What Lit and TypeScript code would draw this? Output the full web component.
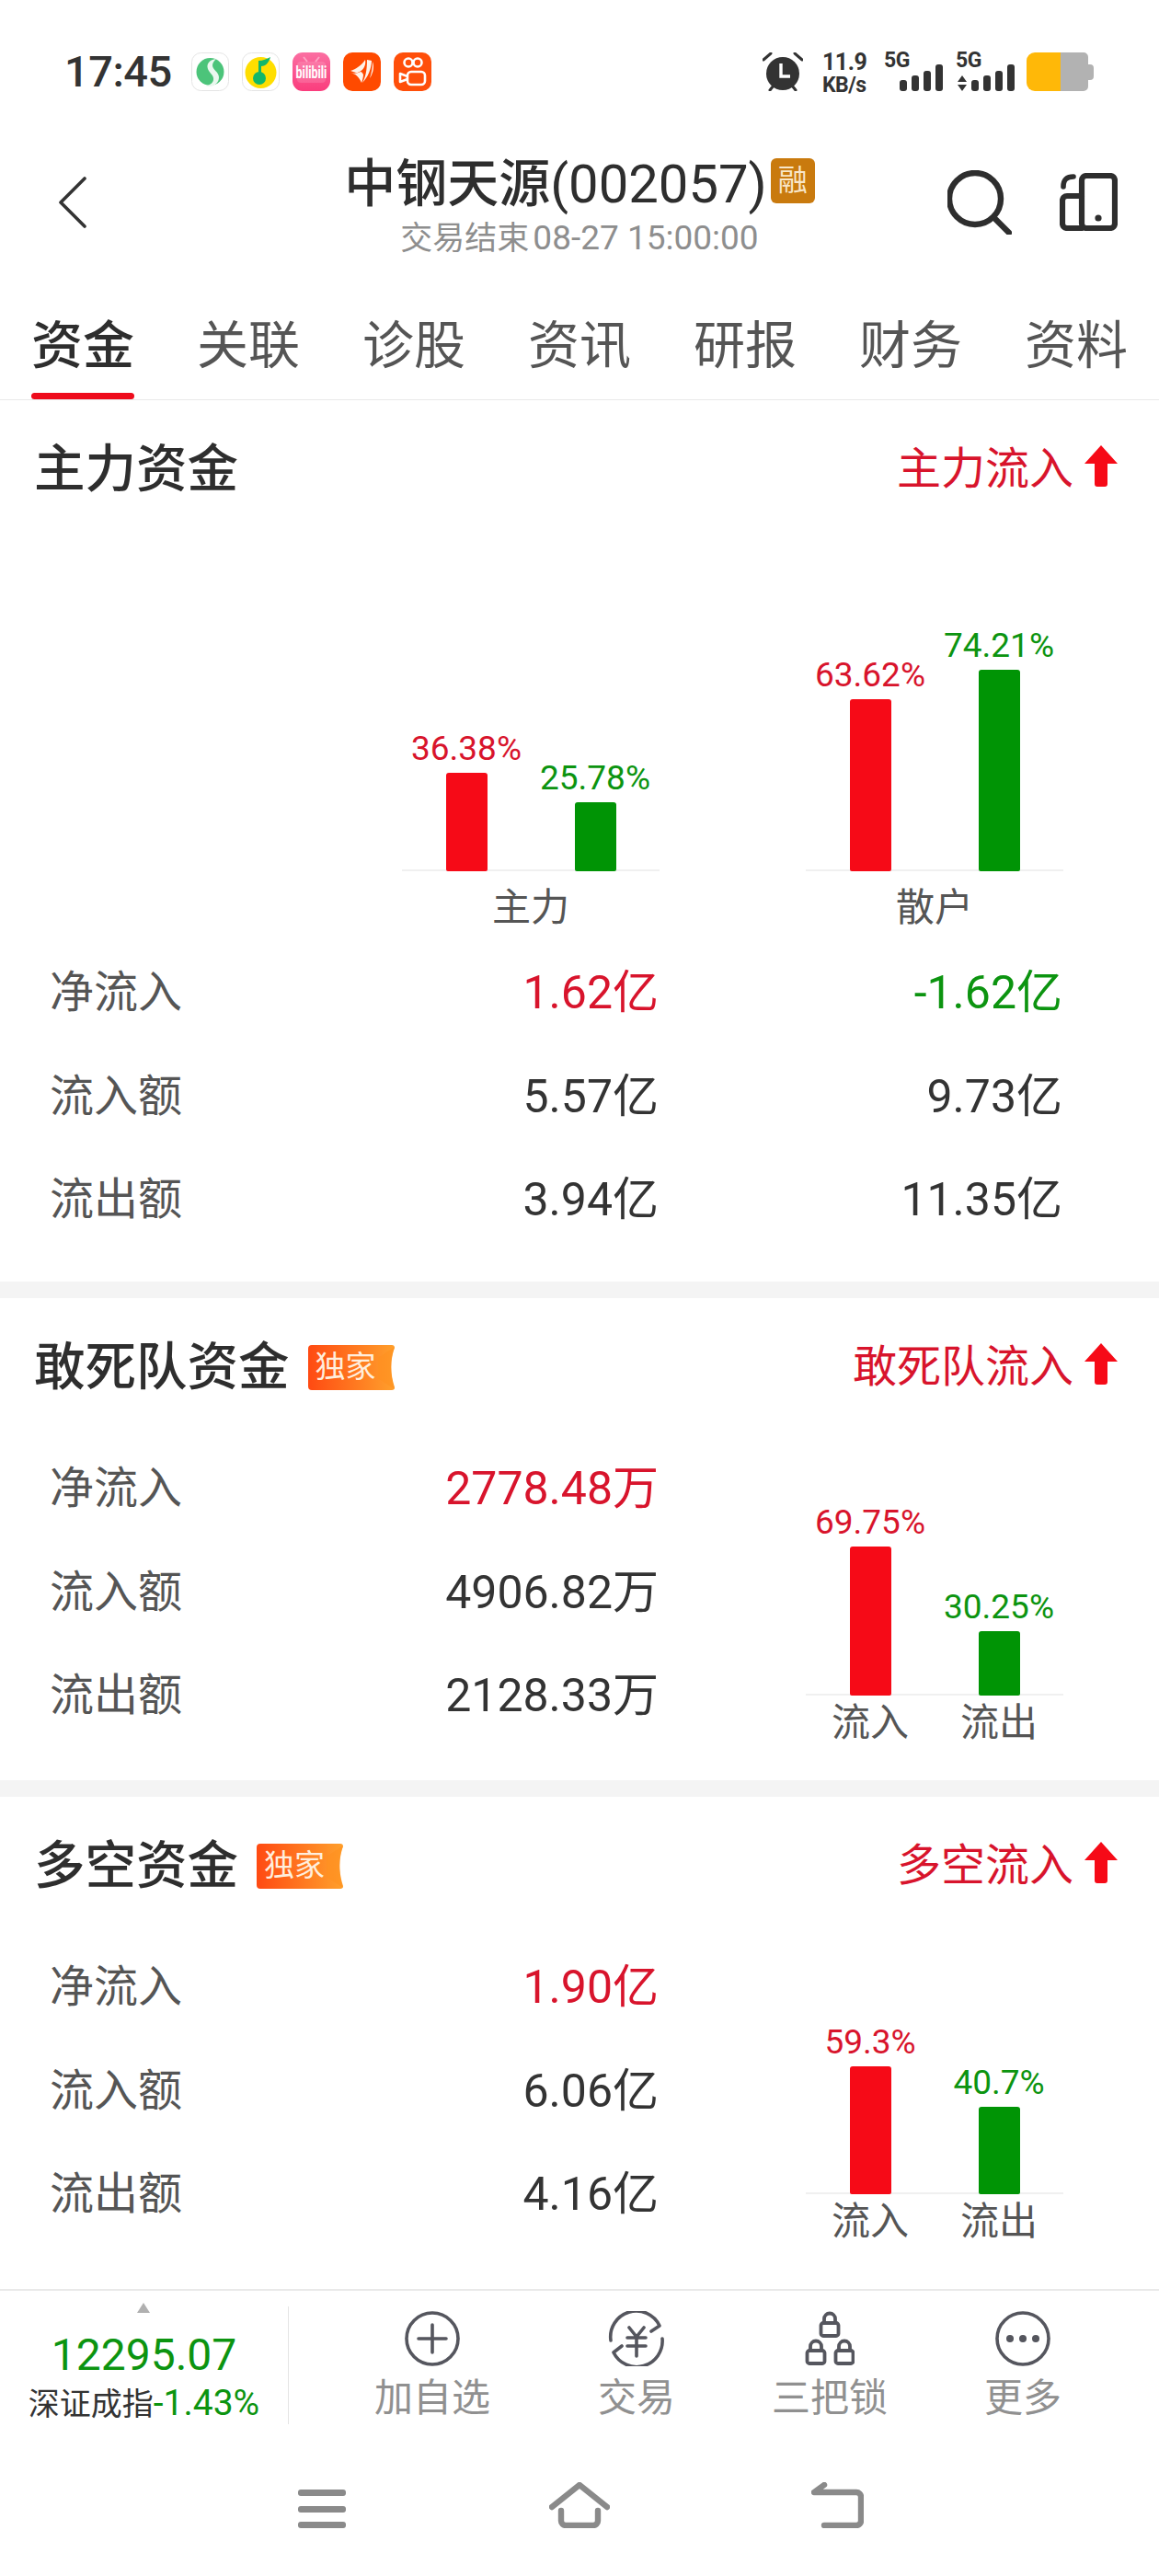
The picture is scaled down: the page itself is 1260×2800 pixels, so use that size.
import { LitElement, html, css, svg } from "lit";
import { customElement } from "lit/decorators.js";

interface Col { pct: string; h: number; up: boolean; }
interface Row { label: string; vals: { t: string; c?: string }[]; }

const lock = (x: number, y: number) => svg`
  <rect x="${x + 2}" y="${y + 12}" width="19" height="14" rx="2.5"/>
  <path d="M${x + 5.5} ${y + 12}V${y + 7.5}a6 6 0 0 1 12 0V${y + 12}"/>`;

@customElement("app-root")
export class AppRoot extends LitElement {
  static styles = css`
    :host { display: block; width: 1260px; height: 2800px; background: #fff; color: #333; overflow: hidden;
      font-family: Roboto, "Noto Sans CJK SC", sans-serif; }
    svg { display: block; flex: none; }
    .status { height: 130px; box-sizing: border-box; padding: 57px 70px 0 70px; display: flex; align-items: flex-start; }
    .time { font-size: 47px; line-height: 42px; font-weight: 500; margin-right: 21px; letter-spacing: -0.5px; color: #333; white-space: nowrap; }
    .apps { display: flex; gap: 14px; }
    .sys { margin-left: auto; display: flex; align-items: flex-start; }
    .speed { width: 50px; margin-left: 21px; margin-right: 17px; font-weight: 700; color: #333; }
    .speed div { font-size: 23px; line-height: 20px; letter-spacing: -0.5px; white-space: nowrap; }
    .speed .n { font-size: 25px; line-height: 22px; margin-bottom: 4px; }
    .sig { position: relative; width: 47px; height: 42px; display: flex; align-items: flex-end; gap: 5px; }
    .g5 { font-size: 23px; line-height: 18px; font-weight: 700; width: 28px; margin-right: -11px; letter-spacing: -0.5px; white-space: nowrap; }
    .sig i { display: block; width: 8px; border-radius: 3px; background: #333; }
    .bat { margin-left: 13px; }
    .nav { height: 170px; display: grid; grid-template-columns: 1fr auto 1fr; }
    .nav-l { padding: 62px 0 0 63px; }
    .nav-c { display: flex; flex-direction: column; align-items: center; padding-top: 41px; }
    .ttl { display: flex; align-items: flex-start; height: 58px; font-size: 56px; line-height: 58px; font-weight: 500; color: #2e2e2e; white-space: nowrap; }
    .ttl .code { font-size: 58px; font-weight: 400; }
    .rong { width: 48px; height: 49px; margin: 1px 0 0 4px; border-radius: 6px; background: #c97a0e; color: #f8e6c8; font-size: 32px; line-height: 49px; text-align: center; font-weight: 400; }
    .sub { margin-top: 10px; font-size: 35px; line-height: 40px; color: #8e8e8e; white-space: nowrap; }
    .sub span { font-size: 37px; margin-left: 4px; }
    .nav-r { display: flex; justify-content: flex-end; gap: 52px; padding: 55px 45px 0 0; align-items: flex-start; }
    .nav-r .tab-ic { margin-top: 3px; }
    .tabs { height: 135px; box-sizing: border-box; border-bottom: 1px solid #e9e9e9; display: grid; grid-template-columns: repeat(7, 180px); }
    .tab { display: flex; flex-direction: column; align-items: center; padding-top: 46px; font-size: 56px; line-height: 60px; color: #555; }
    .tab.on { color: #2e2e2e; font-weight: 500; }
    .tab u { display: block; width: 112px; height: 7px; margin-top: 21px; border-radius: 4px; background: #ee0c1c; }
    .sep { height: 18px; background: #f4f4f4; }
    .head { height: 148px; display: flex; align-items: center; padding: 0 45px 0 37px; }
    .htitle { font-size: 55.5px; line-height: 60px; padding-top: 4px; font-weight: 500; color: #2e2e2e; white-space: nowrap; }
    .flow { margin-left: auto; display: flex; align-items: center; gap: 12px; font-size: 48px; line-height: 60px; padding-top: 2px; color: #d8142c; white-space: nowrap; }
    .flow svg { margin-top: -7px; }
    .dujia { position: relative; width: 95px; height: 49px; margin: 2px 0 0 20px; color: #ffeedd; font-size: 33px; line-height: 48px; padding-left: 8px; box-sizing: border-box; white-space: nowrap; }
    .dujia svg { position: absolute; inset: 0; }
    .dujia span { position: relative; }
    .row { height: 112.5px; display: grid; align-items: center; font-size: 48px; color: #555; }
    .v { text-align: right; font-size: 50px; color: #333; white-space: nowrap; }
    .r { color: #d8142c; }
    .g { color: #0c9410; }
    .rows3 { padding: 0 105px 37.5px 54px; }
    .rows3 .row { grid-template-columns: 223px 439px 439px; }
    .body { display: flex; height: 337px; }
    .rows2 { width: 662px; padding-left: 54px; margin-top: -2px; }
    .rows2 .row { grid-template-columns: 200px 462px; }
    .chart2 { margin-left: 160px; }
    .charts { display: flex; padding-left: 437px; gap: 159px; }
    .plot { display: flex; border-bottom: 2px solid #f0f0f0; align-items: flex-end; box-sizing: border-box; width: 280px; }
    .col { width: 140px; display: flex; flex-direction: column; align-items: center; margin-bottom: -2px; }
    .pct { font-size: 37px; line-height: 44px; margin-bottom: 4px; white-space: nowrap; }
    .bar { width: 45px; border-radius: 3px 3px 2px 2px; }
    .bar.r { background: #f60a17; }
    .bar.g { background: #009405; }
    .labs { display: flex; width: 280px; font-size: 42px; line-height: 46px; color: #555; text-align: center; }
    .labs span { flex: 1; }
    .sec1-lab { margin-top: 13px; }
    .sec1-lab .labs { line-height: 54px; }
    .sec1 .charts.top { height: 364px; align-items: flex-end; }
    .sec1 .rows3 { margin-top: 4px; }
    .cl { margin-top: 7px; }
    .bottom { height: 171px; box-sizing: border-box; border-top: 2px solid #e9e9e9; display: flex; align-items: flex-start; }
    .quote { width: 313px; display: flex; flex-direction: column; align-items: center; padding-top: 13px; box-sizing: border-box; }
    .quote-t { width: 0; height: 0; border-left: 7px solid transparent; border-right: 7px solid transparent; border-bottom: 11px solid #b0b0b0; margin-bottom: 18px; margin-left: -1px; }
    .price { font-size: 48px; line-height: 56px; color: #0c9410; }
    .idx { font-size: 34px; line-height: 48px; white-space: nowrap; color: #333; }
    .idx span { font-size: 39px; color: #0c9410; }
    .div { width: 1px; height: 128px; margin-top: 17px; background: #e4e4e4; }
    .acts { margin-left: 39px; display: grid; grid-template-columns: 234px 210px 210px 210px; }
    .act { display: flex; flex-direction: column; align-items: center; padding-top: 22px; font-size: 42px; line-height: 48px; color: #909090; }
    .act svg { margin-bottom: 11px; height: 60px; }
    .gest { margin-top: 39px; display: grid; grid-template-columns: repeat(3, 280px); justify-content: center; }
    .gest div { display: flex; justify-content: center; }
  `;

  private sig(arrows: boolean) {
    return html`<div class="sig">
      ${[12, 17, 22, 29].map((h) => html`<i style="height:${h}px"></i>`)}
      ${arrows
        ? html`<svg width="12" height="17" viewBox="0 0 12 17" style="position:absolute;left:-16px;bottom:0"><path d="M6 0l5 7H1zM6 17l5-7H1z" fill="#333"/></svg>`
        : ""}
    </div>`;
  }

  private apps() {
    return html`<div class="apps">
      <svg width="41" height="42" viewBox="0 0 41 42"><rect x=".5" y=".5" width="40" height="41" rx="10" fill="#fff" stroke="#e4e4e4"/><circle cx="20.5" cy="21" r="15" fill="#4cc47a"/><path d="M27 7c-7 1-11 5-9 11 2 5 7 7 6 12-1 4-5 6-9 6 8 3 15-2 15-9 0-6-7-8-7-13 0-3 2-5 4-7z" fill="#eaf8ef"/></svg>
      <svg width="41" height="42" viewBox="0 0 41 42"><rect x=".5" y=".5" width="40" height="41" rx="10" fill="#fff" stroke="#e4e4e4"/><circle cx="20.5" cy="22" r="17" fill="#ffde00"/><path d="M18 9v17h3V15c4 0 8-3 10-10-4 2-8 4-13 4z" fill="#12b76a"/><circle cx="19" cy="28" r="7" fill="#12b76a"/></svg>
      <svg width="41" height="42" viewBox="0 0 41 42"><defs><linearGradient id="bl" x1="0" y1="0" x2="0" y2="1"><stop offset="0" stop-color="#fb6fa2"/><stop offset="1" stop-color="#fa3d7d"/></linearGradient></defs><rect width="41" height="42" rx="11" fill="url(#bl)"/><rect x="5" y="10" width="31" height="23" rx="4" fill="#fff" opacity=".14"/><path d="M12 5l4 5M29 5l-4 5" stroke="#fff" stroke-opacity=".4" stroke-width="2"/><text transform="translate(20.5 28) scale(1 1.45)" text-anchor="middle" font-family="Roboto,sans-serif" font-size="12.5" font-weight="700" fill="#fff">bilibili</text></svg>
      <svg width="41" height="42" viewBox="0 0 41 42"><rect width="41" height="42" rx="10" fill="#ff4a00"/><path d="M8 20C14 18 20 14 24 8c1 5-1 10-6 13-2 1-3 1-4 1z" fill="#fff3ea"/><path d="M8 22c5 1 9 4 12 11 1-3 2-6 2-9-1-2-2-3-3-3-4 2-7 2-11 1z" fill="#fff3ea"/><path d="M26 8c2 0 4 1 5 1 0 8-4 18-10 24 3-6 5-12 5-25z" fill="#fff3ea"/><path d="M32 10c2 5 1 12-3 18 2-6 3-12 3-18z" fill="#fff3ea"/></svg>
      <svg width="41" height="42" viewBox="0 0 41 42"><rect width="41" height="42" rx="10" fill="#ff4f0a"/><g fill="none" stroke="#fff" stroke-width="2.6"><circle cx="16" cy="11" r="4.5"/><circle cx="26" cy="11" r="4.5"/><rect x="15" y="21" width="19" height="14" rx="4"/><path d="M15 26l-8-3v9l8-3" stroke-linejoin="round"/></g></svg>
    </div>`;
  }

  private status() {
    return html`<div class="status">
      <div class="time">17:45</div>
      ${this.apps()}
      <div class="sys">
        <svg width="44" height="42" viewBox="0 0 44 42"><circle cx="22" cy="23" r="18" fill="#333"/><path d="M1 8l8-7M43 8l-8-7M8 41l4-5M36 41l-4-5" stroke="#333" stroke-width="3" stroke-linecap="round" fill="none"/><path d="M20 12v14h10" stroke="#fff" stroke-width="3.4" fill="none"/></svg>
        <div class="speed"><div class="n">11.9</div><div>KB/s</div></div>
        <div class="g5">5G</div>${this.sig(false)}
        <div style="width:14px"></div>
        <div class="g5">5G</div>${this.sig(true)}
        <svg class="bat" width="74" height="42" viewBox="0 0 74 42"><path d="M37 0h25a5 5 0 0 1 5 5v8h2a4 4 0 0 1 4 4v9a4 4 0 0 1-4 4h-2v7a5 5 0 0 1-5 5H37z" fill="#b2b2b2"/><path d="M37 0H9a9 9 0 0 0-9 9v24a9 9 0 0 0 9 9h28z" fill="#ffb808"/></svg>
      </div>
    </div>`;
  }

  private nav() {
    return html`<div class="nav">
      <div class="nav-l"><svg width="31" height="56" viewBox="0 0 31 56"><path d="M29 2L3 28l26 26" fill="none" stroke="#333" stroke-width="3.6" stroke-linecap="round" stroke-linejoin="round"/></svg></div>
      <div class="nav-c">
        <div class="ttl">中钢天源<span class="code">(002057)</span><div class="rong">融</div></div>
        <div class="sub">交易结束<span>08-27 15:00:00</span></div>
      </div>
      <div class="nav-r">
        <svg width="70" height="70" viewBox="0 0 70 70" fill="none" stroke="#2e2e2e" stroke-width="6.4" stroke-linecap="round"><circle cx="30" cy="31" r="28"/><path d="M51 52l16 16"/></svg>
        <svg class="tab-ic" width="63" height="63" viewBox="0 0 63 63" fill="none" stroke="#2e2e2e" stroke-width="6.2" stroke-linecap="round"><rect x="24" y="3" width="36" height="57" rx="5"/><path d="M24 25H8a5 5 0 0 0-5 5v25a5 5 0 0 0 5 5h16"/><path d="M15 4c-7 0-11 3-11 11" stroke-width="5.6"/><circle cx="42" cy="49" r="3.6" fill="#2e2e2e" stroke="none"/></svg>
      </div>
    </div>`;
  }

  private tabs() {
    const t = ["资金", "关联", "诊股", "资讯", "研报", "财务", "资料"];
    return html`<div class="tabs">
      ${t.map((x, i) => html`<div class="tab ${i === 0 ? "on" : ""}">${x}${i === 0 ? html`<u></u>` : ""}</div>`)}
    </div>`;
  }

  private head(title: string, flow: string, badge: boolean) {
    return html`<div class="head">
      <div class="htitle">${title}</div>
      ${badge
        ? html`<div class="dujia"><svg width="95" height="49" viewBox="0 0 95 49"><defs><linearGradient id="dj" x1="0" y1="0" x2="1" y2="0"><stop offset="0" stop-color="#ff4a12"/><stop offset="1" stop-color="#ffa02c"/></linearGradient></defs><path d="M4 0h87a3 3 0 0 1 3 3c-5 12-5 28 0 43a3 3 0 0 1-3 3H4a4 4 0 0 1-4-4V4a4 4 0 0 1 4-4z" fill="url(#dj)"/><path d="M94 2L76 14v22l18 12c-5-15-5-31 0-46z" fill="#ff8f1f" opacity=".55"/></svg><span>独家</span></div>`
        : ""}
      <div class="flow">${flow}
        <svg width="36" height="45" viewBox="0 0 36 45"><path d="M18 0l18 20H25v22a3 3 0 0 1-3 3h-8a3 3 0 0 1-3-3V20H0z" fill="#f60a17"/></svg>
      </div>
    </div>`;
  }

  private plot(cols: Col[], h: number) {
    return html`<div class="plot" style="height:${h}px">
      ${cols.map(
        (c) => html`<div class="col">
          <div class="pct ${c.up ? "r" : "g"}">${c.pct}</div>
          <div class="bar ${c.up ? "r" : "g"}" style="height:${c.h}px"></div>
        </div>`
      )}
    </div>`;
  }

  private rows(cls: string, rows: Row[]) {
    return html`<div class="${cls}">
      ${rows.map(
        (r) => html`<div class="row"><div>${r.label}</div>${r.vals.map((v) => html`<div class="v ${v.c ?? ""}">${v.t}</div>`)}</div>`
      )}
    </div>`;
  }

  private section2(title: string, flow: string, rows: Row[], cols: Col[], pb: number) {
    return html`<div>
      ${this.head(title, flow, true)}
      <div class="body">
        ${this.rows("rows2", rows)}
        <div class="chart2">
          ${this.plot(cols, 284)}
          <div class="labs cl"><span>流入</span><span>流出</span></div>
        </div>
      </div>
      <div style="height:${pb}px"></div>
    </div>`;
  }

  render() {
    const s1: Row[] = [
      { label: "净流入", vals: [{ t: "1.62亿", c: "r" }, { t: "-1.62亿", c: "g" }] },
      { label: "流入额", vals: [{ t: "5.57亿" }, { t: "9.73亿" }] },
      { label: "流出额", vals: [{ t: "3.94亿" }, { t: "11.35亿" }] },
    ];
    const s2: Row[] = [
      { label: "净流入", vals: [{ t: "2778.48万", c: "r" }] },
      { label: "流入额", vals: [{ t: "4906.82万" }] },
      { label: "流出额", vals: [{ t: "2128.33万" }] },
    ];
    const s3: Row[] = [
      { label: "净流入", vals: [{ t: "1.90亿", c: "r" }] },
      { label: "流入额", vals: [{ t: "6.06亿" }] },
      { label: "流出额", vals: [{ t: "4.16亿" }] },
    ];
    const ic = "#55565e";
    return html`
      ${this.status()}
      ${this.nav()}
      ${this.tabs()}
      <div class="sec1">
        ${this.head("主力资金", "主力流入", false)}
        <div class="charts top">
          ${this.plot([{ pct: "36.38%", h: 107, up: true }, { pct: "25.78%", h: 75, up: false }], 300)}
          ${this.plot([{ pct: "63.62%", h: 187, up: true }, { pct: "74.21%", h: 219, up: false }], 300)}
        </div>
        <div class="charts sec1-lab">
          <div class="labs"><span>主力</span></div>
          <div class="labs"><span>散户</span></div>
        </div>
        ${this.rows("rows3", s1)}
      </div>
      <div class="sep"></div>
      ${this.section2("敢死队资金", "敢死队流入", s2, [{ pct: "69.75%", h: 162, up: true }, { pct: "30.25%", h: 70, up: false }], 39)}
      <div class="sep"></div>
      ${this.section2("多空资金", "多空流入", s3, [{ pct: "59.3%", h: 139, up: true }, { pct: "40.7%", h: 95, up: false }], 50)}
      <div class="bottom">
        <div class="quote">
          <div class="quote-t"></div>
          <div class="price">12295.07</div>
          <div class="idx">深证成指<span>-1.43%</span></div>
        </div>
        <div class="div"></div>
        <div class="acts">
          <div class="act">
            <svg width="60" height="60" viewBox="0 0 60 60" fill="none" stroke="${ic}" stroke-width="3.6" stroke-linecap="round"><circle cx="30" cy="30" r="28"/><path d="M30 15v30M15 30h30"/></svg>加自选
          </div>
          <div class="act">
            <svg width="62" height="60" viewBox="0 0 62 60" fill="none" stroke="${ic}" stroke-width="3.6" stroke-linecap="round" stroke-linejoin="round"><path d="M3 32A28 28 0 0 1 56 16l-9 6"/><path d="M59 30A28 28 0 0 1 6 45l9-7"/><path d="M23 18l8 10 8-10M21 29h20M21 38h20M31 28v21"/></svg>交易
          </div>
          <div class="act">
            <svg width="54" height="60" viewBox="0 0 54 60" fill="none" stroke="${ic}" stroke-width="3.8">${lock(15.5, 1)}${lock(0.5, 31)}${lock(31.5, 31)}</svg>三把锁
          </div>
          <div class="act">
            <svg width="60" height="60" viewBox="0 0 60 60"><circle cx="30" cy="30" r="28" fill="none" stroke="${ic}" stroke-width="3.6"/><circle cx="16" cy="30" r="4" fill="${ic}"/><circle cx="30" cy="30" r="4" fill="${ic}"/><circle cx="44" cy="30" r="4" fill="${ic}"/></svg>更多
          </div>
        </div>
      </div>
      <div class="gest">
        <div><svg width="52" height="50" viewBox="0 0 52 50" fill="#8a8a8a"><rect y="8" width="52" height="7" rx="3"/><rect y="26" width="52" height="7" rx="3"/><rect y="43" width="52" height="7" rx="3"/></svg></div>
        <div><svg width="66" height="50" viewBox="0 0 66 50" fill="none" stroke="#8a8a8a" stroke-width="6.4" stroke-linecap="round" stroke-linejoin="round"><path d="M3 27L33 3l30 24"/><path d="M13 31v11a5 5 0 0 0 5 5h30a5 5 0 0 0 5-5V31"/></svg></div>
        <div><svg width="57" height="50" viewBox="0 0 57 50" fill="none" stroke="#8a8a8a" stroke-width="6.4" stroke-linecap="round" stroke-linejoin="round"><path d="M14 3L3 11l46 0a5 5 0 0 1 5 5v26a5 5 0 0 1-5 5H14"/></svg></div>
      </div>
    `;
  }
}
